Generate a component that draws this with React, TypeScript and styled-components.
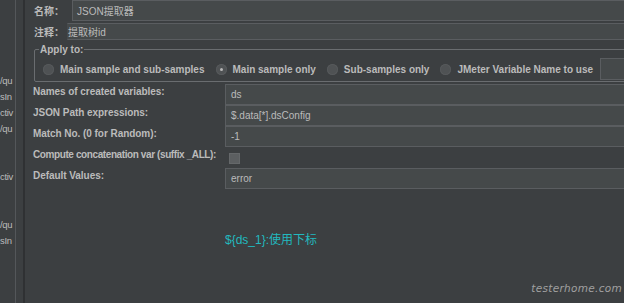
import React from 'react';
import styled, { createGlobalStyle } from 'styled-components';

const GlobalStyle = createGlobalStyle`
  html, body {
    margin: 0;
    padding: 0;
    background: #3c3f41;
  }
  body {
    font-family: "Liberation Sans", "Noto Sans CJK SC", sans-serif;
  }
`;

const Window = styled.div`
  position: relative;
  display: flex;
  width: 624px;
  height: 303px;
  overflow: hidden;
  background: #3c3f41;
  color: #bbbbbb;
  font-size: 10px;
`;

const TreeStrip = styled.ul`
  flex-shrink: 0;
  width: 15px;
  margin: 0;
  padding: 9px 0 0;
  list-style: none;
  border-right: 1px solid #54575a;
  overflow: hidden;
`;

const TreeItem = styled.li`
  height: 16px;
  line-height: 16px;
  white-space: nowrap;
  font-size: 9.5px;
  letter-spacing: -0.3px;
`;

const Splitter = styled.div`
  flex-shrink: 0;
  width: 7px;
  border-right: 2px solid #2f3133;
`;

const Editor = styled.div`
  flex: 1;
  min-width: 0;
  display: flex;
  flex-direction: column;
  padding-left: 8px;
  overflow: hidden;
`;

const HeaderRow = styled.div<{ $height: number; $gap?: number }>`
  display: flex;
  align-items: stretch;
  height: ${p => p.$height}px;
  margin-top: ${p => p.$gap ?? 0}px;
`;

const HeaderLabel = styled.div<{ $width: number }>`
  flex-shrink: 0;
  width: ${p => p.$width}px;
  padding-left: 1px;
  display: flex;
  align-items: center;
  font-family: "Noto Sans CJK SC", sans-serif;
  font-weight: 700;
  font-size: 10px;
  white-space: nowrap;
`;

const HeaderField = styled.div<{ $bordered?: boolean }>`
  flex: 1;
  display: flex;
  align-items: center;
  margin-right: -4px;
  padding-left: ${p => (p.$bordered ? 4 : 0)}px;
  background: #45494a;
  border: 1px solid #5a5d60;
  border-left-color: ${p => (p.$bordered ? '#5a5d60' : '#45494a')};
  font-family: "Liberation Sans", "Noto Sans CJK SC", sans-serif;
  white-space: nowrap;
`;

const Group = styled.div`
  position: relative;
  box-sizing: border-box;
  height: 33px;
  margin: 9px -4px 0 1px;
  padding: 8px 0 0 8px;
  border: 1px solid #6a6d70;
  border-radius: 2px;
`;

const GroupTitle = styled.span`
  position: absolute;
  top: -6px;
  left: 4px;
  padding: 0 1px;
  background: #3c3f41;
  font-weight: 700;
  line-height: 12px;
`;

const RadioRow = styled.div`
  display: flex;
  align-items: center;
  height: 22px;
`;

const RadioOption = styled.label`
  display: flex;
  align-items: center;
  gap: 6px;
  margin-right: 11px;
  font-weight: 700;
  white-space: nowrap;
`;

const RadioDot = styled.span<{ $checked?: boolean }>`
  position: relative;
  width: 11px;
  height: 11px;
  border-radius: 50%;
  background: #4f5254;
  box-shadow: inset 0 0 0 1px #56595b;

  &::after {
    content: '';
    display: ${p => (p.$checked ? 'block' : 'none')};
    position: absolute;
    top: 4px;
    left: 4px;
    width: 3px;
    height: 3px;
    border-radius: 50%;
    background: #b8b8b8;
  }
`;

const VarNameField = styled.div`
  flex: 1;
  align-self: stretch;
  margin-left: -4px;
  background: #45494a;
  border: 1px solid #5a5d60;
`;

const FieldGrid = styled.div`
  display: grid;
  grid-template-columns: 192px 1fr;
  grid-auto-rows: 21px;
  margin-top: 2px;
`;

const FieldLabel = styled.div<{ $tight?: boolean }>`
  padding-top: 1px;
  line-height: 14px;
  font-weight: 700;
  letter-spacing: ${p => (p.$tight ? '-0.4px' : '-0.05px')};
  white-space: nowrap;
`;

const FieldInput = styled.div`
  display: flex;
  align-items: center;
  margin-right: -4px;
  padding-left: 5px;
  background: #45494a;
  border: 1px solid #5a5d60;
  white-space: nowrap;
`;

const CheckCell = styled.div`
  display: flex;
  align-items: center;
  padding: 1px 0 0 4px;
`;

const CheckBox = styled.span`
  box-sizing: border-box;
  width: 11px;
  height: 11px;
  background: #5c5f61;
  border: 1px solid #65686a;
`;

const Hint = styled.div`
  margin: 43px 0 0 192px;
  color: #22b9bf;
  font-family: "Liberation Sans", "Noto Sans CJK SC", sans-serif;
  font-size: 12px;
  line-height: 16px;
  white-space: nowrap;
`;

const Watermark = styled.div`
  position: absolute;
  right: 2px;
  bottom: 9px;
  color: #a0a0a0;
  font-family: "DejaVu Sans", sans-serif;
  font-style: italic;
  font-weight: 200;
  font-size: 10.5px;
  letter-spacing: 0.3px;
`;

const treeItems = [
  '', '', '', '', '/qu', 'sIn', 'ctiv', '/qu', '', '',
  'ctiv', '', '', '/qu', 'sIn', '', '', '', '',
];

const options = [
  { label: 'Main sample and sub-samples', checked: false },
  { label: 'Main sample only', checked: true },
  { label: 'Sub-samples only', checked: false },
  { label: 'JMeter Variable Name to use', checked: false },
];

const fields = [
  { label: 'Names of created variables:', value: 'ds' },
  { label: 'JSON Path expressions:', value: '$.data[*].dsConfig' },
  { label: 'Match No. (0 for Random):', value: '-1' },
  { label: 'Compute concatenation var (suffix _ALL):', check: true },
  { label: 'Default Values:', value: 'error' },
];

export default function App() {
  return (
    <>
      <GlobalStyle />
      <Window>
        <TreeStrip>
          {treeItems.map((t, i) => (
            <TreeItem key={i}>{t}</TreeItem>
          ))}
        </TreeStrip>
        <Splitter />
        <Editor>
          <HeaderRow $height={21}>
            <HeaderLabel $width={38}>名称：</HeaderLabel>
            <HeaderField $bordered>JSON提取器</HeaderField>
          </HeaderRow>
          <HeaderRow $height={17} $gap={2}>
            <HeaderLabel $width={33}>注释：</HeaderLabel>
            <HeaderField>提取树id</HeaderField>
          </HeaderRow>

          <Group>
            <GroupTitle>Apply to:</GroupTitle>
            <RadioRow>
              {options.map(o => (
                <RadioOption key={o.label}>
                  <RadioDot $checked={o.checked} />
                  {o.label}
                </RadioOption>
              ))}
              <VarNameField />
            </RadioRow>
          </Group>

          <FieldGrid>
            {fields.map(f => (
              <React.Fragment key={f.label}>
                <FieldLabel $tight={f.check}>{f.label}</FieldLabel>
                {f.check ? (
                  <CheckCell>
                    <CheckBox />
                  </CheckCell>
                ) : (
                  <FieldInput>{f.value}</FieldInput>
                )}
              </React.Fragment>
            ))}
          </FieldGrid>

          <Hint>{'${ds_1}:使用下标'}</Hint>
        </Editor>
        <Watermark>testerhome.com</Watermark>
      </Window>
    </>
  );
}
